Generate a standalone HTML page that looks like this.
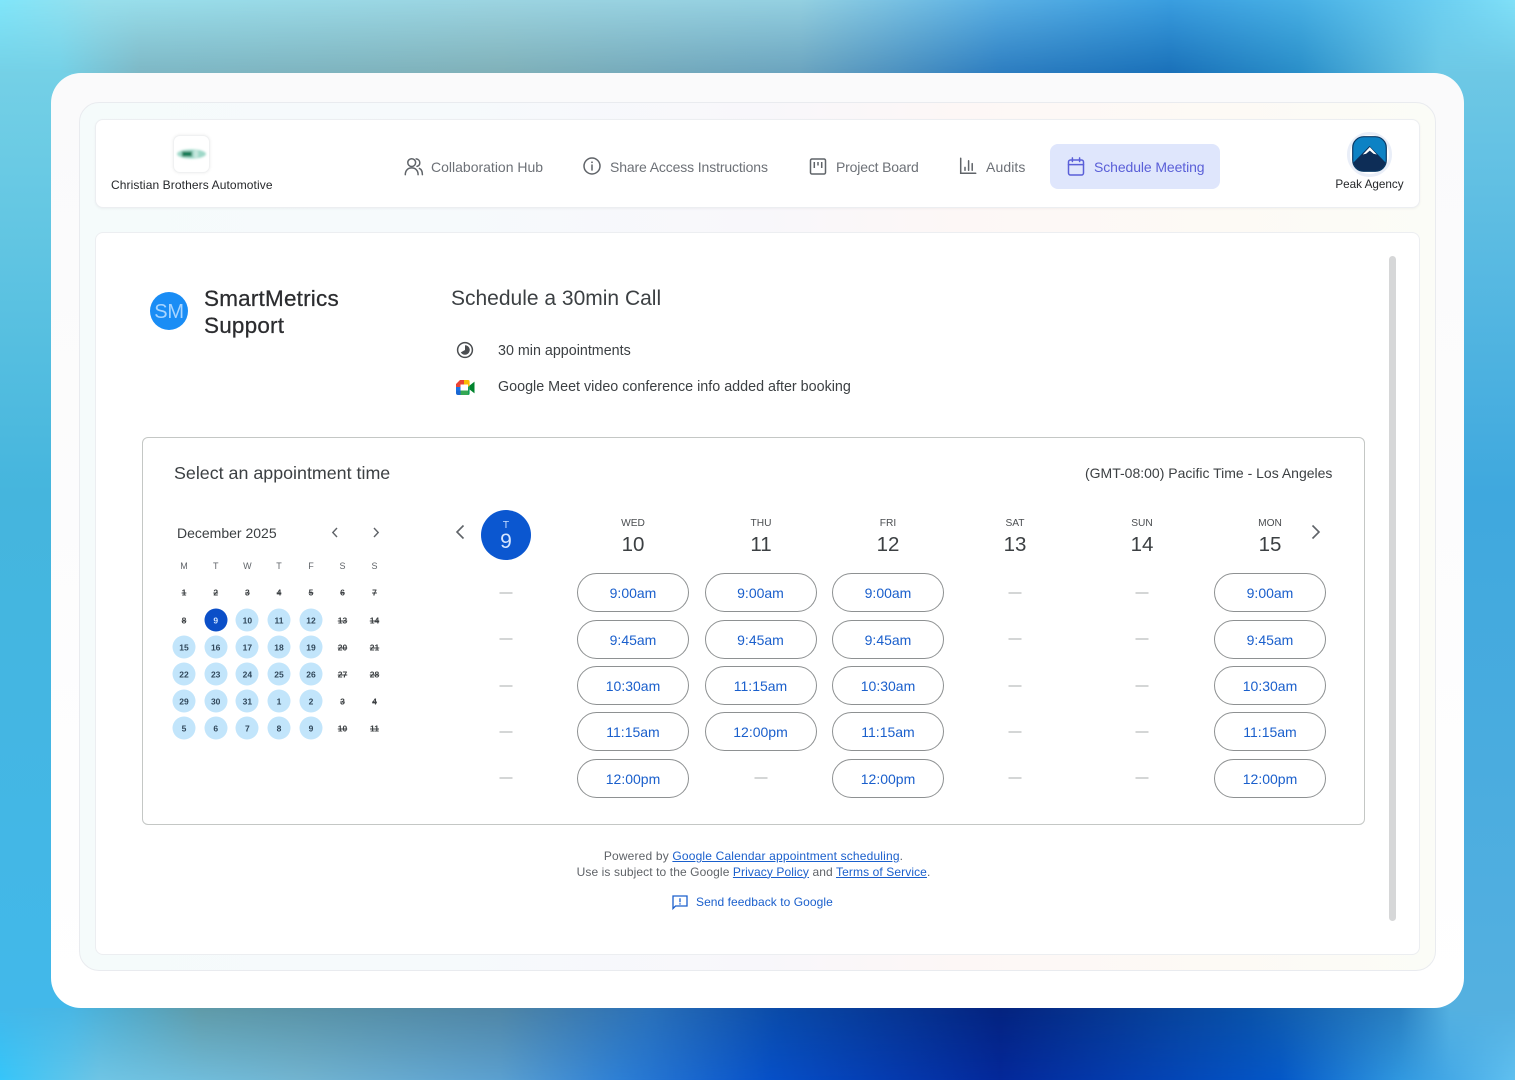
<!DOCTYPE html>
<html lang="en"><head><meta charset="utf-8"><title>Schedule Meeting</title>
<style>
html,body{margin:0;padding:0}
body{width:1515px;height:1080px;position:relative;overflow:hidden;font-family:"Liberation Sans",Arial,sans-serif;background:#45b5dd}
div,span,svg{box-sizing:border-box}
.abs{position:absolute}
.t{position:absolute;white-space:nowrap;line-height:20px;transform:translateY(calc(-50% + 1px))}
.c{position:absolute;white-space:nowrap;line-height:20px;transform:translate(-50%,calc(-50% + 1px));text-align:center}
.n{font-size:14px;color:#6d7177;letter-spacing:-.1px}
.b{position:absolute;width:112px;height:39px;border:1px solid #8e9192;border-radius:20px;color:#1a5fcc;font-size:14px;display:flex;align-items:center;justify-content:center;background:#fff;padding-top:1px}
.d{position:absolute;width:13px;height:2px;background:#d4d6d6;transform:translate(-50%,-50%)}
.dw{font-size:10.2px;color:#4a4d50;margin-top:1px}
.dn{font-size:20.5px;color:#3c4043}
.m{font-size:9px;color:#5f6368}
.k{position:absolute;width:23px;height:23px;border-radius:50%;transform:translate(-50%,-50%);font-size:8.5px;font-weight:bold;color:#30475a;display:flex;align-items:center;justify-content:center}
.a{background:#c2e5fb}
.x{text-decoration:line-through;color:#3c4043}
.l{color:#1a5fcc;text-decoration:underline}
svg{position:absolute;overflow:visible}
</style></head><body>

<div class="abs" style="left:0;top:73px;width:90px;height:935px;background:linear-gradient(180deg,#74d0e6 0,#45b5dd 45%,#42b8ea 100%)"></div>
<div class="abs" style="left:1425px;top:73px;width:90px;height:935px;background:linear-gradient(180deg,#6dc8e5 0,#3fa8de 45%,#54b0e0 100%)"></div>

<div class="abs" style="left:0;top:0;width:1515px;height:73px;background:linear-gradient(90deg,#80e6fa 0,#98dfec 100px,#9cd4e1 500px,#94d0e1 800px,#5ab0e4 1000px,#3a9ee0 1170px,#48b0e5 1300px,#80e0f8 1515px)"></div>
<div class="abs" style="left:0;top:0;width:1515px;height:73px;background:linear-gradient(90deg,#74d0e6 0,#74d0e6 60px,#7db7c5 140px,#7fb0b8 500px,#6aa3be 800px,#2d7dc0 1000px,#1a70b8 1170px,#2a8ec8 1300px,#6dc8e5 1440px,#6dc8e5 1515px);-webkit-mask-image:linear-gradient(180deg,transparent 0,#000 73px);mask-image:linear-gradient(180deg,transparent 0,#000 73px)"></div>
<div class="abs" style="left:0;top:1008px;width:1515px;height:72px;background:linear-gradient(90deg,#36c6fa 0,#6fc5e5 100px,#72b4d0 300px,#5ba0d0 500px,#2d7fd5 620px,#0650c8 770px,#04289a 1000px,#0458c8 1280px,#3098e0 1400px,#60c0f0 1515px)"></div>
<div class="abs" style="left:0;top:1008px;width:1515px;height:72px;background:linear-gradient(90deg,#42b8ea 0,#48b6e4 70px,#5f9aa8 200px,#4f85a5 500px,#2a70b8 650px,#0a4aa8 780px,#04237f 1000px,#0a52a8 1250px,#2a7fc0 1400px,#54b0e0 1450px,#54b0e0 1515px);-webkit-mask-image:linear-gradient(0deg,transparent 0,#000 72px);mask-image:linear-gradient(0deg,transparent 0,#000 72px)"></div>

<div class="abs" style="left:51px;top:73px;width:1413px;height:935px;border-radius:30px;background:linear-gradient(180deg,#fafafb 0,#fff 100%)"></div>
<div class="abs" style="left:79px;top:102px;width:1357px;height:869px;border-radius:20px;border:1px solid #e9ebef;background:linear-gradient(90deg,#f5fbfb 0,#f6fafc 25%,#f8f7fb 50%,#fdf7f6 65%,#fdfaf5 85%,#fbfcf7 100%)"></div>
<div class="abs" style="left:95px;top:119px;width:1325px;height:89px;border-radius:8px;background:#fff;border:1px solid #eceef1;box-shadow:0 1px 2px rgba(60,70,90,.06)"></div>
<div class="abs" style="left:95px;top:232px;width:1325px;height:723px;border-radius:8px;background:#fff;border:1px solid #eceef1"></div>

<!-- Left brand -->
<div class="abs" style="left:173px;top:135px;width:37px;height:38px;border-radius:7px;background:#fff;border:1px solid #f0f1f2;box-shadow:0 0 3px rgba(0,0,0,.08)"></div>
<svg style="left:173px;top:135px" width="37" height="38" viewBox="0 0 37 38"><defs><filter id="bl" x="-30%" y="-80%" width="160%" height="260%"><feGaussianBlur stdDeviation="1"/></filter></defs><g filter="url(#bl)"><ellipse cx="18.500" cy="19" rx="14.500" ry="4.600" fill="#9ed8c8"/><rect x="9" y="16.500" width="10" height="5" fill="#0c7a55"/><rect x="21" y="15.500" width="4" height="7" fill="#c8e8df"/></g></svg>
<div class="t" style="left:111px;top:183.500px;font-size:12px;color:#26282b;letter-spacing:.1px">Christian Brothers Automotive</div>

<!-- Nav -->
<svg style="left:404px;top:157px" width="20" height="19" viewBox="0 0 20 19" fill="none" stroke="#5f6368" stroke-width="1.5" stroke-linecap="round"><circle cx="7.700" cy="5.600" r="3.900"/><path d="M1.300 17.600c0-4 2.600-6.700 6.400-6.700s6.400 2.700 6.400 6.700"/><path d="M12.200 1.900c2.300.3 3.600 1.900 3.600 3.800 0 1.800-1.100 3.200-2.800 3.700M15.400 11.400c1.900.9 3 3 3 6.200"/></svg>
<div class="t n" style="left:431px;top:165.500px;letter-spacing:0">Collaboration Hub</div>

<svg style="left:583px;top:157px" width="18" height="18" viewBox="0 0 18 18" fill="none" stroke="#5f6368" stroke-width="1.500"><circle cx="9" cy="9" r="8"/><path d="M9 8v5" stroke-linecap="round"/><circle cx="9" cy="5.300" r=".9" fill="#5f6368" stroke="none"/></svg>
<div class="t n" style="left:610px;top:165.500px;letter-spacing:-.13px">Share Access Instructions</div>

<svg style="left:809px;top:158px" width="18" height="17" viewBox="0 0 18 17" fill="none" stroke="#5f6368" stroke-width="1.500"><rect x="1.500" y="1" width="15" height="15" rx="1.500"/><path d="M5.300 4v6M9 4v3.500M12.700 4v6"/></svg>
<div class="t n" style="left:836px;top:165.500px;letter-spacing:-.17px">Project Board</div>

<svg style="left:959px;top:157px" width="18" height="18" viewBox="0 0 18 18" fill="none" stroke="#5f6368" stroke-width="1.500" stroke-linecap="round"><path d="M1.700 1.200v15h15"/><path d="M6 13.200v-2.800M9.600 13.200V3.800M13.200 13.200V6.600"/></svg>
<div class="t n" style="left:986px;top:165.500px;letter-spacing:.1px">Audits</div>

<div class="abs" style="left:1050px;top:144px;width:170px;height:45px;border-radius:8px;background:#dfe6fc"></div>
<svg style="left:1067px;top:157px" width="18" height="19" viewBox="0 0 18 19" fill="none" stroke="#5a5fd8" stroke-width="1.500" stroke-linecap="round"><rect x="1.500" y="3" width="15" height="15" rx="2"/><path d="M1.500 7.600h15M5.400 .9v3.600M12.600 .9v3.600"/></svg>
<div class="t n" style="left:1094px;top:165.500px;color:#5a5fd8">Schedule Meeting</div>

<!-- Peak Agency -->
<div class="abs" style="left:1347px;top:132px;width:45px;height:45px;border-radius:50%;background:#fff;border:3px solid #e9eef8"></div>
<svg style="left:1352px;top:136px" width="35" height="36" viewBox="0 0 35 36"><defs><clipPath id="oc"><rect x=".5" y=".5" width="34" height="35" rx="11"/></clipPath></defs><g clip-path="url(#oc)"><rect width="35" height="36" fill="#0d82c4"/><path d="M0 36V28L17.500 10 35 28v8z" fill="#0d2d57"/><path d="M17.800 11l7 7.500-3.300-.7-3.700-3.200-3.700 3.200-3.300.7z" fill="#fff"/></g><rect x=".7" y=".7" width="33.600" height="34.600" rx="11" fill="none" stroke="#0a3a66" stroke-width="1.200"/></svg>
<div class="c" style="left:1369.500px;top:184px;font-size:11.700px;color:#26282b">Peak Agency</div>

<!-- Heading -->
<div class="abs" style="left:150px;top:292px;width:38px;height:38px;border-radius:50%;background:#1a8df5"></div>
<div class="c" style="left:169px;top:311px;font-size:20px;color:#a8d5ff;letter-spacing:-.3px">SM</div>
<div class="t" style="left:204px;top:297.500px;font-size:22.500px;color:#2b2c2f;letter-spacing:.2px;-webkit-text-stroke:.25px #2b2c2f">SmartMetrics</div>
<div class="t" style="left:204px;top:324.500px;font-size:22.500px;color:#2b2c2f;letter-spacing:.2px;-webkit-text-stroke:.25px #2b2c2f">Support</div>
<div class="t" style="left:451px;top:297.500px;font-size:21px;color:#3c4043">Schedule a 30min Call</div>

<svg style="left:456px;top:341px" width="18" height="18" viewBox="0 0 18 18"><circle cx="9" cy="9" r="7.400" fill="none" stroke="#4a4d50" stroke-width="1.500"/><path d="M9 4.200a4.800 4.800 0 1 1-4.200 7.200L9 9z" fill="#4a4d50"/></svg>
<div class="t" style="left:498px;top:350px;font-size:14.300px;color:#3c4043">30 min appointments</div>

<svg style="left:456px;top:380px" width="19" height="15" viewBox="0 0 19 15"><path d="M4 0h8v4.500H4.500V7H0V4z" fill="#ea4335"/><path d="M0 7h4.500v3.500H0z" fill="#1a73e8"/><path d="M0 10.500h4.500V15H2a2 2 0 0 1-2-2z" fill="#1967d2"/><path d="M4.500 10.500H12V15H4.500z" fill="#34a853"/><path d="M12 0a1.600 1.600 0 0 1 1.600 1.600V7H12V4.500H8V0z" fill="#fbbc04"/><path d="M4.500 4.500H12V10.500H4.500z" fill="#fff"/><path d="M12 7l1.600-1.500V13.400a1.600 1.600 0 0 1-1.600 1.600z" fill="#0f9d58"/><path d="M13.600 5.500L18.500 1.600v11.800L13.600 9.500z" fill="#00832d"/></svg>
<div class="t" style="left:498px;top:386px;font-size:14.330px;color:#3c4043">Google Meet video conference info added after booking</div>

<!-- Scrollbar -->
<div class="abs" style="left:1389px;top:256px;width:7px;height:665px;border-radius:4px;background:#d6d7d8"></div>

<!-- Panel -->
<div class="abs" style="left:142px;top:437px;width:1223px;height:388px;border:1px solid #c4c7c5;border-radius:6px"></div>
<div class="t" style="left:174px;top:471.500px;font-size:17.850px;color:#3c4043">Select an appointment time</div>
<div class="t" style="left:1085px;top:471.500px;font-size:14px;color:#3c4043">(GMT-08:00) Pacific Time - Los Angeles</div>

<!-- Mini calendar -->
<div class="t" style="left:177px;top:531.500px;font-size:14px;color:#3c4043">December 2025</div>
<svg style="left:331px;top:527px" width="8" height="11" viewBox="0 0 8 11" fill="none" stroke="#5f6368" stroke-width="1.400"><path d="M6 1L1.800 5.500 6 10"/></svg>
<svg style="left:372px;top:527px" width="8" height="11" viewBox="0 0 8 11" fill="none" stroke="#5f6368" stroke-width="1.400"><path d="M2 1l4.200 4.500L2 10"/></svg>

<div class="c m" style="left:184px;top:565px">M</div><div class="c m" style="left:215.700px;top:565px">T</div><div class="c m" style="left:247.400px;top:565px">W</div><div class="c m" style="left:279px;top:565px">T</div><div class="c m" style="left:311px;top:565px">F</div><div class="c m" style="left:342.500px;top:565px">S</div><div class="c m" style="left:374.500px;top:565px">S</div>

<div class="k x" style="left:184px;top:592.500px">1</div><div class="k x" style="left:215.700px;top:592.500px">2</div><div class="k x" style="left:247.400px;top:592.500px">3</div><div class="k x" style="left:279px;top:592.500px">4</div><div class="k x" style="left:311px;top:592.500px">5</div><div class="k x" style="left:342.500px;top:592.500px">6</div><div class="k x" style="left:374.500px;top:592.500px">7</div>

<div class="k x" style="left:184px;top:620px">8</div><div class="k" style="left:215.700px;top:620px;background:#0b4fc8;color:#cfe4ff">9</div><div class="k a" style="left:247.400px;top:620px">10</div><div class="k a" style="left:279px;top:620px">11</div><div class="k a" style="left:311px;top:620px">12</div><div class="k x" style="left:342.500px;top:620px">13</div><div class="k x" style="left:374.500px;top:620px">14</div>

<div class="k a" style="left:184px;top:647px">15</div><div class="k a" style="left:215.700px;top:647px">16</div><div class="k a" style="left:247.400px;top:647px">17</div><div class="k a" style="left:279px;top:647px">18</div><div class="k a" style="left:311px;top:647px">19</div><div class="k x" style="left:342.500px;top:647px">20</div><div class="k x" style="left:374.500px;top:647px">21</div>

<div class="k a" style="left:184px;top:674px">22</div><div class="k a" style="left:215.700px;top:674px">23</div><div class="k a" style="left:247.400px;top:674px">24</div><div class="k a" style="left:279px;top:674px">25</div><div class="k a" style="left:311px;top:674px">26</div><div class="k x" style="left:342.500px;top:674px">27</div><div class="k x" style="left:374.500px;top:674px">28</div>

<div class="k a" style="left:184px;top:701px">29</div><div class="k a" style="left:215.700px;top:701px">30</div><div class="k a" style="left:247.400px;top:701px">31</div><div class="k a" style="left:279px;top:701px">1</div><div class="k a" style="left:311px;top:701px">2</div><div class="k x" style="left:342.500px;top:701px">3</div><div class="k x" style="left:374.500px;top:701px">4</div>

<div class="k a" style="left:184px;top:728px">5</div><div class="k a" style="left:215.700px;top:728px">6</div><div class="k a" style="left:247.400px;top:728px">7</div><div class="k a" style="left:279px;top:728px">8</div><div class="k a" style="left:311px;top:728px">9</div><div class="k x" style="left:342.500px;top:728px">10</div><div class="k x" style="left:374.500px;top:728px">11</div>

<!-- Week header -->
<svg style="left:455px;top:524px" width="10" height="16" viewBox="0 0 10 16" fill="none" stroke="#5f6368" stroke-width="1.600"><path d="M8.500 1.500L2 8l6.500 6.500"/></svg>
<svg style="left:1311px;top:524px" width="10" height="16" viewBox="0 0 10 16" fill="none" stroke="#5f6368" stroke-width="1.600"><path d="M1.500 1.500L8 8l-6.500 6.500"/></svg>
<div class="abs" style="left:481px;top:509.500px;width:50px;height:50px;border-radius:50%;background:#0b57d0"></div>
<div class="c" style="left:506px;top:524px;font-size:10.500px;color:#c5dcff">T</div>
<div class="c" style="left:506px;top:541px;font-size:21px;color:#d7e6ff">9</div>

<div class="c dw" style="left:633px;top:521.500px">WED</div><div class="c dn" style="left:633px;top:543.500px">10</div>
<div class="c dw" style="left:761px;top:521.500px">THU</div><div class="c dn" style="left:761px;top:543.500px">11</div>
<div class="c dw" style="left:888px;top:521.500px">FRI</div><div class="c dn" style="left:888px;top:543.500px">12</div>
<div class="c dw" style="left:1015px;top:521.500px">SAT</div><div class="c dn" style="left:1015px;top:543.500px">13</div>
<div class="c dw" style="left:1142px;top:521.500px">SUN</div><div class="c dn" style="left:1142px;top:543.500px">14</div>
<div class="c dw" style="left:1270px;top:521.500px">MON</div><div class="c dn" style="left:1270px;top:543.500px">15</div>

<!-- Slots -->
<div class="b" style="left:577px;top:573px">9:00am</div><div class="b" style="left:577px;top:619.500px">9:45am</div><div class="b" style="left:577px;top:666px">10:30am</div><div class="b" style="left:577px;top:712px">11:15am</div><div class="b" style="left:577px;top:758.500px">12:00pm</div>
<div class="b" style="left:704.500px;top:573px">9:00am</div><div class="b" style="left:704.500px;top:619.500px">9:45am</div><div class="b" style="left:704.500px;top:666px">11:15am</div><div class="b" style="left:704.500px;top:712px">12:00pm</div>
<div class="b" style="left:832px;top:573px">9:00am</div><div class="b" style="left:832px;top:619.500px">9:45am</div><div class="b" style="left:832px;top:666px">10:30am</div><div class="b" style="left:832px;top:712px">11:15am</div><div class="b" style="left:832px;top:758.500px">12:00pm</div>
<div class="b" style="left:1214px;top:573px">9:00am</div><div class="b" style="left:1214px;top:619.500px">9:45am</div><div class="b" style="left:1214px;top:666px">10:30am</div><div class="b" style="left:1214px;top:712px">11:15am</div><div class="b" style="left:1214px;top:758.500px">12:00pm</div>

<!-- Dashes -->
<div class="d" style="left:506px;top:593px"></div><div class="d" style="left:506px;top:639px"></div><div class="d" style="left:506px;top:686px"></div><div class="d" style="left:506px;top:732px"></div><div class="d" style="left:506px;top:778px"></div>
<div class="d" style="left:761px;top:778px"></div>
<div class="d" style="left:1015px;top:593px"></div><div class="d" style="left:1015px;top:639px"></div><div class="d" style="left:1015px;top:686px"></div><div class="d" style="left:1015px;top:732px"></div><div class="d" style="left:1015px;top:778px"></div>
<div class="d" style="left:1142px;top:593px"></div><div class="d" style="left:1142px;top:639px"></div><div class="d" style="left:1142px;top:686px"></div><div class="d" style="left:1142px;top:732px"></div><div class="d" style="left:1142px;top:778px"></div>

<!-- Footer -->
<div class="c" style="left:753.500px;top:855px;font-size:12px;color:#5f6368;letter-spacing:.17px">Powered by <span class="l">Google Calendar appointment scheduling</span>.</div>
<div class="c" style="left:753.500px;top:870.500px;font-size:12px;color:#5f6368;letter-spacing:.1px">Use is subject to the Google <span class="l">Privacy Policy</span> and <span class="l">Terms of Service</span>.</div>
<svg style="left:672px;top:895px" width="16" height="15" viewBox="0 0 16 15" fill="none" stroke="#1a5fcc" stroke-width="1.300"><path d="M1 1h14v10H3.500L1 13.500z"/><path d="M8 3.200v4M8 8.300v1.300"/></svg>
<div class="t" style="left:696px;top:901px;font-size:12px;color:#1a5fcc;letter-spacing:.06px">Send feedback to Google</div>

</body></html>
